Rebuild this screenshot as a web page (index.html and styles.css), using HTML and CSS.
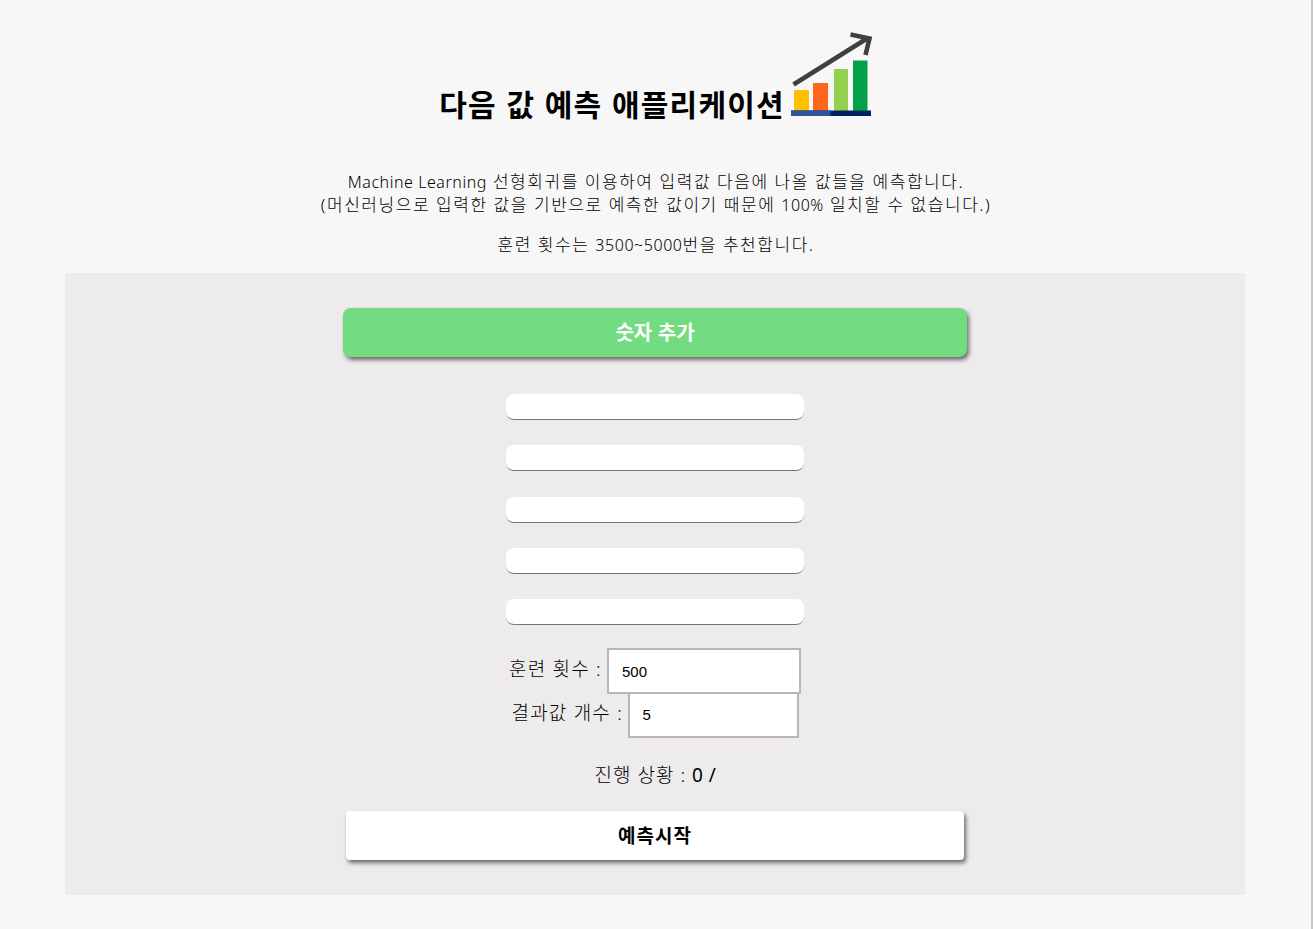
FILE: index.html
```html
<!DOCTYPE html>
<html lang="ko">
<head>
    <meta charset="UTF-8">
    <meta name="viewport" content="width=device-width, initial-scale=1.0">
    <title>다음 값 예측 애플리케이션</title>
    <link rel="stylesheet" href="styles.css">
</head>
<body>
    <header class="header">
        <h1 class="title">다음 값 예측 애플리케이션</h1>
        <svg class="logo" width="84" height="88" viewBox="0 0 84 88">
            <rect x="4" y="60" width="15" height="21" fill="#ffc000"/>
            <rect x="23" y="53" width="15" height="28" fill="#ff661c"/>
            <rect x="44" y="39" width="14" height="42" fill="#92d050"/>
            <rect x="63" y="30.500" width="14.500" height="50.500" fill="#00a34a"/>
            <rect x="1" y="80.500" width="80" height="5.500" fill="#002060"/>
            <rect x="1" y="80.500" width="39.500" height="5.500" fill="#2f5597"/>
            <path d="M3.500 54.500L77 8.500M60.500 4.500L79.500 8.500L75.500 25" fill="none" stroke="#404040" stroke-width="4.600"/>
        </svg>
    </header>

    <div class="intro">
        <p><span class="latin">Machine Learning</span> 선형회귀를 이용하여 입력값 다음에 나올 값들을 예측합니다.<br>
        (머신러닝으로 입력한 값을 기반으로 예측한 값이기 때문에 <span class="latin">100%</span> 일치할 수 없습니다.)</p>
        <p>훈련 횟수는 <span class="latin">3500~5000</span>번을 추천합니다.</p>
    </div>

    <main class="container">
        <button type="button" class="btn btn-add">숫자 추가</button>

        <div class="numbers">
            <input type="text" class="number">
            <input type="text" class="number">
            <input type="text" class="number">
            <input type="text" class="number">
            <input type="text" class="number">
        </div>

        <div class="row row-train">
            <label for="train">훈련 횟수 :</label>
            <input type="text" id="train" class="option" value="500">
        </div>
        <div class="row row-result">
            <label for="result">결과값 개수 :</label>
            <input type="text" id="result" class="option" value="5">
        </div>

        <div class="status"><span>진행 상황 :</span> <span class="count">0 /</span></div>

        <button type="button" class="btn btn-start">예측시작</button>
    </main>
</body>
</html>
```
FILE: styles.css
```css
* {
    box-sizing: border-box;
}
body {
    margin: 0;
    height: 929px;
    padding: 30px 66px 0 65px;
    background-color: #f7f7f7;
    border-right: 2px solid #c8c8c8;
    font-family: 'Noto Sans', 'Noto Sans CJK KR', sans-serif;
    color: #000;
    overflow: hidden;
}
.header {
    display: flex;
    justify-content: center;
    align-items: flex-end;
    gap: 5px;
    height: 88px;
    padding-left: 3px;
}
.title {
    margin: 0;
    font-family: 'Noto Sans CJK KR', sans-serif;
    font-size: 30px;
    line-height: 30px;
    letter-spacing: 1.2px;
    white-space: nowrap;
}
.logo {
    display: block;
}
.intro {
    height: 155px;
    padding: 52px 0 0 2px;
    text-align: center;
    font-size: 17px;
    line-height: 23px;
    letter-spacing: 1.55px;
    font-weight: 300;
    white-space: nowrap;
}
.intro p {
    margin: 0 0 17px;
}
.latin {
    font-size: 16px;
    line-height: 20px;
    letter-spacing: 0.55px;
}
.container {
    display: flex;
    flex-direction: column;
    align-items: center;
    width: 1180px;
    height: 622px;
    padding-top: 35px;
    background-color: #eeebec;
}
.btn {
    border: none;
    padding: 0 0 2px;
    font-family: 'Noto Sans CJK KR', sans-serif;
    font-weight: bold;
    font-size: 19px;
    box-shadow: 2px 3px 4px rgba(0, 0, 0, 0.55);
}
.btn-add {
    width: 624px;
    height: 49px;
    color: #fff;
    background-color: #73db80;
    border-radius: 8px;
    font-size: 20px;
}
.numbers {
    display: flex;
    flex-direction: column;
    gap: 25.300px;
    margin-top: 37px;
}
.number {
    width: 298px;
    height: 26px;
    border: none;
    border-bottom: 1px solid #767676;
    border-radius: 8px;
    background-color: #fff;
}
.row {
    display: flex;
    font-size: 19px;
    letter-spacing: 1.2px;
    font-weight: 300;
    white-space: nowrap;
}
.row label {
    line-height: 42px;
}
.option {
    border: 2px solid #bcb5b8;
    padding: 0 13px;
    background-color: #fff;
    font-family: 'Liberation Sans', Arial, sans-serif;
    font-size: 15px;
}
.row-train {
    width: 292px;
    height: 44px;
    margin-top: 23px;
}
.row-train label {
    width: 98px;
}
.row-train .option {
    width: 194px;
    height: 46px;
}
.row-result {
    width: 287px;
    height: 46px;
}
.row-result label {
    width: 116px;
}
.row-result .option {
    width: 171px;
    height: 46px;
    padding-bottom: 2px;
}
.status {
    height: 73px;
    padding: 23px 0 0 1px;
    font-size: 19px;
    line-height: 28px;
    font-weight: 300;
    letter-spacing: 1px;
}
.count {
    font-weight: 400;
    letter-spacing: 0.5px;
}
.btn-start {
    width: 618px;
    height: 49px;
    color: #000;
    background-color: #fff;
    border-radius: 4px;
    letter-spacing: 1px;
}
```
